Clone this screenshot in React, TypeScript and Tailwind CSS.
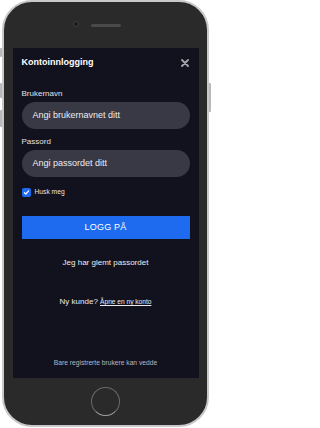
import React from "react";

const font = { fontFamily: '"Liberation Sans", Arial, sans-serif' };

function CloseIcon() {
  return (
    <svg width="8" height="8" viewBox="0 0 8 8" className="block">
      <path d="M1 1L7 7M7 1L1 7" stroke="#a3a3ab" strokeWidth="1.8" strokeLinecap="round" />
    </svg>
  );
}

function CheckBox() {
  return (
    <span className="flex h-[9px] w-[9px] items-center justify-center rounded-[2px] bg-[#1f6bf0]">
      <svg width="7" height="7" viewBox="0 0 7 7">
        <path d="M1.4 3.7L2.8 5L5.6 1.9" fill="none" stroke="#fff" strokeWidth="1.2" strokeLinecap="round" strokeLinejoin="round" />
      </svg>
    </span>
  );
}

function Field({ label, placeholder }: { label: string; placeholder: string }) {
  return (
    <div className="flex flex-col">
      <label className="h-[10px] text-[8px] leading-[10px] text-[#e2e2e6]">{label}</label>
      <div className="mt-[3px] flex h-[27px] items-center rounded-full bg-[#393946] pl-[11px] text-[9px] text-[#ededf0]">
        {placeholder}
      </div>
    </div>
  );
}

export default function App() {
  return (
    <div className="relative h-[428px] w-[211px] bg-white" style={font}>
      {/* side buttons */}
      <span className="absolute left-0 top-[48px] h-[9px] w-[3px] rounded-l-[1px] bg-[#b9b9bd]" />
      <span className="absolute left-0 top-[83px] h-[15px] w-[3px] rounded-l-[1px] bg-[#b9b9bd]" />
      <span className="absolute left-0 top-[110px] h-[17px] w-[3px] rounded-l-[1px] bg-[#b9b9bd]" />
      <span className="absolute right-0 top-[83px] h-[29px] w-[3px] rounded-r-[1px] bg-[#b9b9bd]" />

      <div className="absolute left-[2px] top-0 flex h-[427px] w-[207px] flex-col items-center rounded-[30px] border-2 border-[#c8c8cb] bg-[#2a2a2b]">
        <div className="relative flex h-[46px] w-full items-center justify-center">
          <span className="absolute left-[70px] top-[20px] h-[4px] w-[4px] rounded-full bg-[#1c1c1e] ring-1 ring-[#3a3a3c]" />
          <span className="h-[3px] w-[30px] rounded-full bg-[#4a4a4c]" />
        </div>

        <div className="flex h-[330px] w-[186px] flex-col bg-[#12121e] px-[9px]">
          <div className="mt-[8px] flex h-[14px] items-center justify-between pr-[1px]">
            <span className="text-[9px] font-bold text-white">Kontoinnlogging</span>
            <CloseIcon />
          </div>

          <div className="mt-[19px]">
            <Field label="Brukernavn" placeholder="Angi brukernavnet ditt" />
          </div>
          <div className="mt-[8px]">
            <Field label="Passord" placeholder="Angi passordet ditt" />
          </div>

          <div className="mt-[10px] flex items-center gap-[4px]">
            <CheckBox />
            <span className="text-[6.7px] text-[#e6e6ea]">Husk meg</span>
          </div>

          <button className="mt-[19px] h-[23px] w-full bg-[#1f6bf0] text-[9px] tracking-[0.2px] text-white">
            LOGG PÅ
          </button>

          <p className="mt-[19px] h-[10px] text-center text-[8px] leading-[10px] text-[#ececf0]">
            Jeg har glemt passordet
          </p>

          <p className="mt-[29px] h-[10px] text-center text-[8px] leading-[10px] text-[#ececf0]">
            Ny kunde? <span className="text-[6.6px] underline">Åpne en ny konto</span>
          </p>

          <p className="mt-[51px] h-[10px] text-center text-[6.7px] leading-[10px] text-[#b8b8c0]">
            Bare registrerte brukere kan vedde
          </p>
        </div>

        <div className="flex flex-1 items-center justify-center">
          <span className="h-[29px] w-[29px] rounded-full border border-[#6a6a6d] border-b-[#a0a0a3]" />
        </div>
      </div>
    </div>
  );
}
